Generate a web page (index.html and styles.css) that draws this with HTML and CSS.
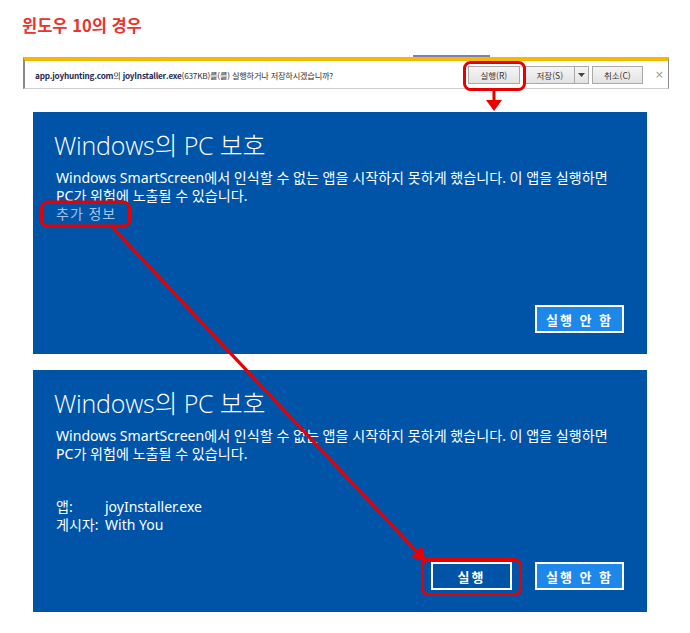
FILE: index.html
```html
<!DOCTYPE html>
<html lang="ko">
<head>
<meta charset="utf-8">
<title>윈도우 10의 경우</title>
<link rel="stylesheet" href="styles.css">
</head>
<body>
<div class="page">
  <h1 class="title">윈도우 10의 경우</h1>

  <div class="dlbar">
    <div class="dl-text"><b>app.joyhunting.com</b>의 <b>joyInstaller.exe</b>(637KB)를(를) 실행하거나 저장하시겠습니까?</div>
    <div class="dl-actions">
      <span class="dl-btn run">실행(R)</span>
      <span class="dl-split"><span class="dl-btn save">저장(S)</span><span class="dl-drop"><svg width="7" height="4" viewBox="0 0 7 4"><path d="M0 0h7L3.5 4z" fill="#444"/></svg></span></span>
      <span class="dl-btn cancel">취소(C)</span>
      <span class="dl-close">×</span>
    </div>
  </div>

  <section class="panel p1">
    <h2 class="ph">Windows의 PC 보호</h2>
    <p class="pb">Windows SmartScreen에서 인식할 수 없는 앱을 시작하지 못하게 했습니다. 이 앱을 실행하면<br>PC가 위험에 노출될 수 있습니다.</p>
    <p class="more">추가 정보</p>
    <div class="actions">
      <span class="wbtn light">실행 안 함</span>
    </div>
  </section>

  <section class="panel p2">
    <h2 class="ph">Windows의 PC 보호</h2>
    <p class="pb">Windows SmartScreen에서 인식할 수 없는 앱을 시작하지 못하게 했습니다. 이 앱을 실행하면<br>PC가 위험에 노출될 수 있습니다.</p>
    <dl class="info">
      <div class="row"><dt>앱:</dt><dd>joyInstaller.exe</dd></div>
      <div class="row"><dt>게시자:</dt><dd>With You</dd></div>
    </dl>
    <div class="actions">
      <span class="wbtn dark">실행</span>
      <span class="wbtn light">실행 안 함</span>
    </div>
  </section>

  <svg class="annot" width="690" height="633" viewBox="0 0 690 633">
    <rect x="413" y="55" width="77" height="2" fill="#7f7fb8"/>
    <rect x="464.5" y="62.5" width="60" height="27" rx="6" fill="none" stroke="#e60000" stroke-width="3"/>
    <line x1="494" y1="90" x2="494" y2="101" stroke="#e60000" stroke-width="3"/>
    <polygon points="486,100 502,100 494,111" fill="#e60000"/>
    <rect x="41.5" y="202" width="88" height="24" rx="6" fill="none" stroke="#e60000" stroke-width="3"/>
    <line x1="113" y1="228" x2="418" y2="553" stroke="#e60000" stroke-width="3.2"/>
    <polygon points="426,562 411,557 422,546" fill="#e60000"/>
    <rect x="422.5" y="559.5" width="98" height="35" rx="6" fill="none" stroke="#e60000" stroke-width="3"/>
  </svg>
</div>
</body>
</html>
```

FILE: styles.css
```css
html, body {
  margin: 0;
  padding: 0;
  background: #ffffff;
}

.page {
  position: relative;
  width: 690px;
  height: 633px;
  overflow: hidden;
  font-family: "Noto Sans", "Noto Sans CJK KR", sans-serif;
}

.title {
  margin: 0;
  padding: 13px 0 0 22px;
  height: 44px;
  box-sizing: border-box;
  font-family: "Noto Sans CJK KR", sans-serif;
  font-size: 16.5px;
  font-weight: 700;
  line-height: 24px;
  color: #e8332f;
}

.dlbar {
  margin-left: 23px;
  width: 646px;
  height: 32px;
  box-sizing: border-box;
  border-top: 4px solid #f6b900;
  border-left: 2px solid #8a8a8a;
  border-right: 1px solid #8a8a8a;
  border-bottom: 1px solid #d0d0d0;
  background: #ffffff;
  display: flex;
  align-items: center;
  padding-left: 10px;
  margin-top: 13px;
}

.dl-text {
  font-family: "Noto Sans CJK KR", sans-serif;
  font-size: 8.2px;
  color: #333;
  white-space: nowrap;
  letter-spacing: -0.2px;
}

.dl-text b {
  color: #1f2a55;
  font-weight: 700;
}

.dl-actions {
  margin-left: auto;
  display: flex;
  align-items: center;
  padding-right: 4px;
}

.dl-btn {
  display: inline-flex;
  align-items: center;
  justify-content: center;
  height: 18px;
  box-sizing: border-box;
  border: 1px solid #a9a9a9;
  background: linear-gradient(#f5f5f5, #e3e3e3);
  font-family: "Noto Sans CJK KR", sans-serif;
  font-size: 8.5px;
  color: #333;
}

.dl-btn.run { width: 52px; }
.dl-btn.save { width: 50px; }
.dl-btn.cancel { width: 51px; margin-left: 3px; }

.dl-split {
  display: inline-flex;
  margin-left: 5px;
}

.dl-drop {
  width: 14px;
  height: 18px;
  box-sizing: border-box;
  border: 1px solid #a9a9a9;
  border-left: none;
  background: linear-gradient(#f5f5f5, #e3e3e3);
  display: inline-flex;
  align-items: center;
  justify-content: center;
}

.dl-close {
  margin-left: 12px;
  font-family: "DejaVu Sans", sans-serif;
  font-size: 11px;
  color: #9a9a9a;
}

.panel {
  margin-left: 33px;
  width: 614px;
  height: 242px;
  box-sizing: border-box;
  background: #0054a8;
  color: #ffffff;
  display: flex;
  flex-direction: column;
  padding: 17px 23px 21px 21px;
}

.p1 { margin-top: 23px; }
.p2 { margin-top: 16px; padding-bottom: 22px; }

.ph {
  margin: 0;
  font-family: "Open Sans", "Noto Sans CJK KR", sans-serif;
  font-weight: 300;
  font-size: 25px;
  line-height: 32px;
  letter-spacing: -0.2px;
}

.pb {
  margin: 8px 0 0 2px;
  font-size: 14.1px;
  line-height: 18px;
}

.more {
  margin: 0 0 0 2px;
  font-size: 14px;
  line-height: 18px;
  color: #a6c3e6;
  letter-spacing: 1px;
}

.info {
  margin: 35px 0 0 2px;
  font-size: 14px;
  line-height: 18px;
}

.info .row {
  display: flex;
}

.info dt {
  width: 49px;
}

.info dd {
  margin: 0;
}

.actions {
  margin-top: auto;
  display: flex;
  justify-content: flex-end;
  gap: 23px;
}

.wbtn {
  display: inline-flex;
  align-items: center;
  justify-content: center;
  height: 28px;
  box-sizing: border-box;
  border: 2px solid #ffffff;
  font-family: "Noto Sans CJK KR", sans-serif;
  font-size: 13px;
  font-weight: 700;
  letter-spacing: 2px;
  color: #ffffff;
}

.wbtn.light {
  width: 89px;
  background: #1e88ea;
}

.wbtn.dark {
  width: 81px;
  background: #0054a8;
}

.annot {
  position: absolute;
  left: 0;
  top: 0;
  pointer-events: none;
}
```
